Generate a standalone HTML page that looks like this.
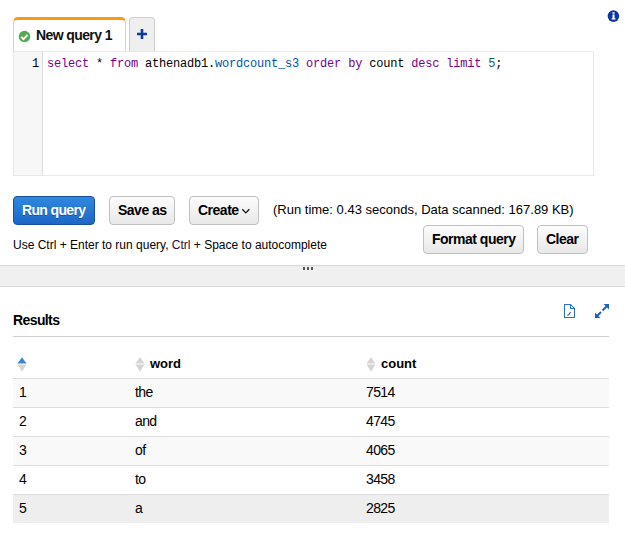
<!DOCTYPE html>
<html><head><meta charset="utf-8">
<style>
*{box-sizing:border-box;margin:0;padding:0}
html,body{width:625px;height:536px;overflow:hidden;background:#fff;font-family:"Liberation Sans",sans-serif;color:#000}
.abs{position:absolute}
.t{position:absolute;white-space:nowrap;line-height:16px}
.tab{left:13px;top:17px;width:113px;height:35px;border:1px solid #d5d5d5;border-bottom:none;border-top:3px solid #f79b15;border-radius:5px 5px 0 0;background:#fff}
.plus{left:129px;top:17px;width:26px;height:34px;border:1px solid #cfcfcf;border-bottom:none;border-radius:4px 4px 0 0;background:#efefef}
.editor{left:13px;top:51px;width:581px;height:125px;border:1px solid #e9e9e9;background:#fff}
.gutter{position:absolute;left:0;top:0;width:29px;height:123px;background:#f7f7f7;border-right:1px solid #dcdcdc}
.mono{font-family:"Liberation Mono",monospace;font-size:12px;letter-spacing:-0.2px;white-space:pre;line-height:16px}
.kw{color:#770088}
.tb{color:#0055aa}
.num{color:#116644}
.btn{position:absolute;height:29px;border:1px solid #c0c0c0;border-radius:4px;background:linear-gradient(#fcfcfc,#e8e8e8)}
.btn.primary{background:linear-gradient(#3088de,#1c67c6);border-color:#184f9e}
.bt{font-size:14px;letter-spacing:-0.5px;font-weight:bold;color:#000}
.divider{left:0;top:265px;width:625px;height:22px;background:#f0f0f0;border-top:1px solid #d8d8d8;border-bottom:1px solid #d6d6d6}
.row{position:absolute;left:13px;width:596px;height:29px;border-top:1px solid #dedede}
.c{position:absolute;font-size:14px;letter-spacing:-0.6px;line-height:16px;top:5px;white-space:nowrap}
</style></head><body>
<div class="abs tab"></div>
<svg class="abs" style="left:18px;top:30px" width="13" height="13" viewBox="0 0 13 13"><circle cx="6.5" cy="6.5" r="5.8" fill="#56aa54"/><path d="M3.3 6.9l2.2 2.2 4.1-4.2" stroke="#fff" stroke-width="1.9" fill="none"/></svg>
<div class="t" style="left:36px;top:27px;font-size:14px;letter-spacing:-0.6px;font-weight:bold;color:#111">New query 1</div>
<div class="abs plus"></div>
<svg class="abs" style="left:136px;top:28px" width="12" height="12" viewBox="0 0 12 12"><path d="M6 1v10M1 6h10" stroke="#0a3d9b" stroke-width="2.6"/></svg>
<svg class="abs" style="left:606px;top:9px" width="15" height="15" viewBox="606 9 15 15"><circle cx="613.4" cy="16.1" r="5.8" fill="#0a36a8"/><path d="M612.4 12.3h2.2v1.5h-2.2z M612.5 14.4h2.1v3.9h0.9v1.3h-3.9v-1.3h0.9z" fill="#fff"/></svg>
<div class="abs editor"><div class="gutter"></div></div>
<div class="t mono" style="left:32px;top:56px">1</div>
<div class="t mono" style="left:47px;top:56px"><span class="kw">select</span> * <span class="kw">from</span> athenadb1.<span class="tb">wordcount_s3</span> <span class="kw">order</span> <span class="kw">by</span> count <span class="kw">desc</span> <span class="kw">limit</span> <span class="num">5</span>;</div>

<div class="btn primary" style="left:13px;top:196px;width:82px"></div>
<div class="t bt" style="left:22px;top:202px;color:#fff;letter-spacing:-0.65px;text-shadow:0 1px 0 rgba(0,20,80,.35)">Run query</div>
<div class="btn" style="left:109px;top:196px;width:66px"></div>
<div class="t bt" style="left:118px;top:202px">Save as</div>
<div class="btn" style="left:189px;top:196px;width:70px"></div>
<div class="t bt" style="left:198px;top:202px">Create</div>
<svg class="abs" style="left:241px;top:208px" width="10" height="7" viewBox="0 0 10 7"><path d="M1.3 1.3l3.5 3.6 3.5-3.6" stroke="#111" stroke-width="1.3" fill="none"/></svg>
<div class="t" style="left:273px;top:202px;font-size:13px">(Run time: 0.43 seconds, Data scanned: 167.89 KB)</div>
<div class="t" style="left:13px;top:237px;font-size:12px">Use Ctrl + Enter to run query, <span style="color:#1a1040">Ctrl</span> + Space to autocomplete</div>
<div class="btn" style="left:423px;top:225px;width:101px"></div>
<div class="t bt" style="left:432px;top:231px">Format query</div>
<div class="btn" style="left:537px;top:225px;width:51px"></div>
<div class="t bt" style="left:546px;top:231px">Clear</div>

<div class="abs divider"></div>
<div class="abs" style="left:303px;top:267px;width:2px;height:3px;background:#555"></div>
<div class="abs" style="left:307px;top:267px;width:2px;height:3px;background:#555"></div>
<div class="abs" style="left:311px;top:267px;width:2px;height:3px;background:#555"></div>

<div class="t" style="left:13px;top:312px;font-weight:bold;font-size:14px;letter-spacing:-0.6px">Results</div>
<div class="abs" style="left:13px;top:336px;width:596px;height:1px;background:#cfcfcf"></div>
<svg class="abs" style="left:562px;top:302px" width="16" height="18" viewBox="562 302 16 18"><path d="M564.5 304.5h6l4 4v9h-10z M570.5 304.5v4h4" stroke="#2a6fd0" stroke-width="1.05" fill="none"/><path d="M567.3 315.4l1.6-0.8 1.6-2.6" stroke="#2a5fc0" stroke-width="1.1" fill="none"/></svg>
<svg class="abs" style="left:592px;top:302px" width="20" height="18" viewBox="592 302 20 18"><path d="M606.5 306.5l-4 4 M601 312l-4 4" stroke="#1f5fcc" stroke-width="2"/><path d="M603.6 304h5.4v5.4z M595 312.6v5.4h5.4z" fill="#1f5fcc"/></svg>

<!-- header sort icons -->
<svg class="abs" style="left:17px;top:357px" width="11" height="15" viewBox="0 0 11 15"><path d="M0.5 6.5L5 0.3 9.5 6.5z" fill="#3b86c6"/><path d="M0.5 7.6h9L5 14.8z" fill="#d4d4d4"/></svg>
<svg class="abs" style="left:135px;top:357px" width="11" height="15" viewBox="0 0 11 15"><path d="M0.5 6.5L5 0.3 9.5 6.5z" fill="#d4d4d4"/><path d="M0.5 7.6h9L5 14.8z" fill="#d4d4d4"/></svg>
<div class="t" style="left:150px;top:356px;font-weight:bold;font-size:13px">word</div>
<svg class="abs" style="left:366px;top:357px" width="11" height="15" viewBox="0 0 11 15"><path d="M0.5 6.5L5 0.3 9.5 6.5z" fill="#d4d4d4"/><path d="M0.5 7.6h9L5 14.8z" fill="#d4d4d4"/></svg>
<div class="t" style="left:381px;top:356px;font-weight:bold;font-size:13px">count</div>

<div class="row" style="top:378px;background:#f9f9f9"><span class="c" style="left:6px">1</span><span class="c" style="left:122px">the</span><span class="c" style="left:353px">7514</span></div>
<div class="row" style="top:407px;background:#fff"><span class="c" style="left:6px">2</span><span class="c" style="left:122px">and</span><span class="c" style="left:353px">4745</span></div>
<div class="row" style="top:436px;background:#f9f9f9"><span class="c" style="left:6px">3</span><span class="c" style="left:122px">of</span><span class="c" style="left:353px">4065</span></div>
<div class="row" style="top:465px;background:#fff"><span class="c" style="left:6px">4</span><span class="c" style="left:122px">to</span><span class="c" style="left:353px">3458</span></div>
<div class="row" style="top:494px;background:#eeeeee;height:29px"><span class="c" style="left:6px">5</span><span class="c" style="left:122px">a</span><span class="c" style="left:353px">2825</span></div>
</body></html>
